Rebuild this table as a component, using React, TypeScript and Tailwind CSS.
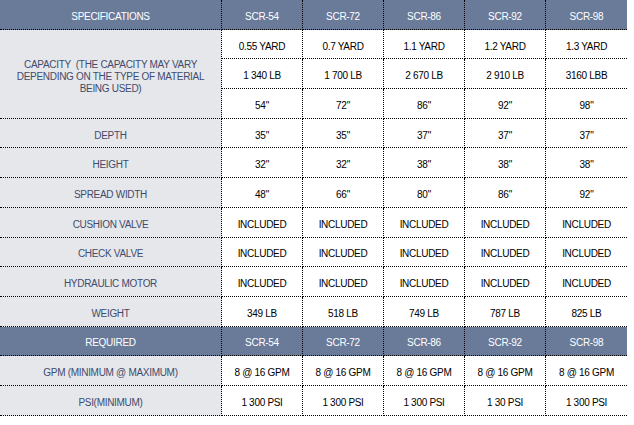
import React from "react";

const models = ["SCR-54", "SCR-72", "SCR-86", "SCR-92", "SCR-98"];

const rows: { label: string; values: string[] }[] = [
  { label: "DEPTH", values: ["35\"", "35\"", "37\"", "37\"", "37\""] },
  { label: "HEIGHT", values: ["32\"", "32\"", "38\"", "38\"", "38\""] },
  { label: "SPREAD WIDTH", values: ["48\"", "66\"", "80\"", "86\"", "92\""] },
  { label: "CUSHION VALVE", values: Array(5).fill("INCLUDED") },
  { label: "CHECK VALVE", values: Array(5).fill("INCLUDED") },
  { label: "HYDRAULIC MOTOR", values: Array(5).fill("INCLUDED") },
  { label: "WEIGHT", values: ["349 LB", "518 LB", "749 LB", "787 LB", "825 LB"] },
];

const required: { label: string; values: string[] }[] = [
  { label: "GPM (MINIMUM @ MAXIMUM)", values: Array(5).fill("8 @ 16 GPM") },
  { label: "PSI(MINIMUM)", values: ["1 300 PSI", "1 300 PSI", "1 300 PSI", "1 30 PSI", "1 300 PSI"] },
];

const capacity = [
  ["0.55 YARD", "0.7 YARD", "1.1 YARD", "1.2 YARD", "1.3 YARD"],
  ["1 340 LB", "1 700 LB", "2 670 LB", "2 910 LB", "3160 LBB"],
  ["54\"", "72\"", "86\"", "92\"", "98\""],
];

const cell = "flex items-center justify-center h-[29.7px] pt-[4px] border-b border-dotted border-black";

function HeaderRow({ title }: { title: string }) {
  return (
    <>
      <div className={`${cell} bg-[#6a7b9a] text-white border-r`}>{title}</div>
      {models.map((m, i) => (
        <div key={m} className={`${cell} bg-[#6a7b9a] text-white ${i < 4 ? "border-r" : ""}`}>
          {m}
        </div>
      ))}
    </>
  );
}

function DataRow({ label, values }: { label: string; values: string[] }) {
  return (
    <>
      <div className={`${cell} bg-[#e6e7eb] text-[#414b6b] border-r`}>{label}</div>
      {values.map((v, i) => (
        <div key={i} className={`${cell} text-black ${i < 4 ? "border-r" : ""}`}>
          {v}
        </div>
      ))}
    </>
  );
}

export default function App() {
  return (
    <div className="w-[634px] h-[425px] bg-white">
      <div className="w-[627px] grid grid-cols-[222px_repeat(5,81px)] text-[10px] tracking-[-0.3px] [font-family:'Liberation_Sans',Arial,sans-serif]">
        <HeaderRow title="SPECIFICATIONS" />

        {/* capacity label spans the three capacity rows */}
        <div className="row-span-3 flex items-center justify-center bg-[#e6e7eb] text-[#414b6b] border-r border-b border-dotted border-black text-center leading-[12px] px-2 pt-[6px]">
          CAPACITY&nbsp; (THE CAPACITY MAY VARY DEPENDING ON THE TYPE OF MATERIAL BEING USED)
        </div>
        {capacity.map((r, ri) =>
          r.map((v, i) => (
            <div key={`${ri}-${i}`} className={`${cell} text-black ${i < 4 ? "border-r" : ""}`}>
              {v}
            </div>
          ))
        )}

        {rows.map((r) => (
          <DataRow key={r.label} {...r} />
        ))}

        <HeaderRow title="REQUIRED" />

        {required.map((r) => (
          <DataRow key={r.label} {...r} />
        ))}
      </div>
    </div>
  );
}
